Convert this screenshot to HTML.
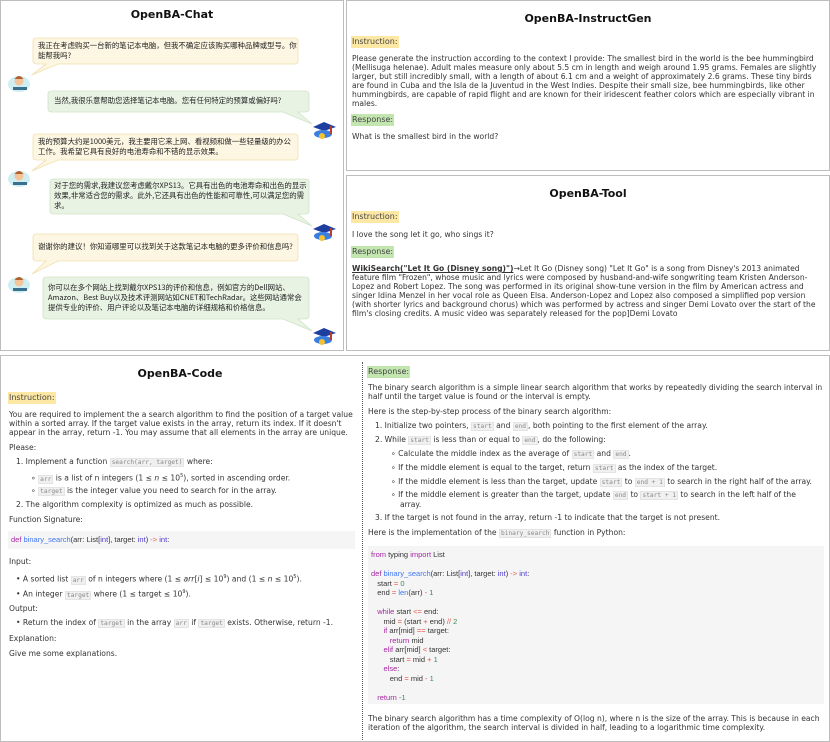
<!DOCTYPE html>
<html><head><meta charset="utf-8"><style>
*{margin:0;padding:0;box-sizing:border-box}
body{width:830px;height:742px;background:#fff;position:relative;overflow:hidden;font-family:"DejaVu Sans","Noto Sans CJK SC",sans-serif;font-size:7.6px;color:#333;line-height:9px}
.panel{position:absolute;border:1px solid #bdbdbd;background:#fff}
.title{position:absolute;font-weight:bold;font-size:11px;color:#111;text-align:center;font-family:"DejaVu Sans",sans-serif}
.abs{position:absolute}
.lab{position:absolute;padding:1px 1px;font-size:8px;line-height:10px;color:#444}
.ly{background:#fde7a4}.lg{background:#c3e6b0}
.cn{font-family:"Noto Sans CJK SC",sans-serif;font-size:7.4px;line-height:10px;color:#222}
code,.c{font-family:"DejaVu Sans Mono",monospace;font-size:6.2px;color:#888;background:#f0f0f0;border:1px solid #e4e4e4;padding:0 1px}
.kw{color:#a626a4}.fn{color:#4078f2}.op{color:#e45649}.nm{color:#3a8a5a}
</style></head><body>

<div class="panel" style="left:0;top:0;width:344px;height:351px"></div>
<div class="title" style="left:0;top:10px;width:344px">OpenBA-Chat</div>
<svg class="abs" style="left:0;top:0" width="344" height="351">
<g fill="#fdf6e2" stroke="#f1dfae" stroke-width="0.8">
<path d="M37 38 H295 Q298 38 298 41 V61 Q298 64 295 64 H58 L32 75 L46 64 H37 Q33 64 33 61 V41 Q33 38 37 38Z"/>
<path d="M37 134 H295 Q298 134 298 137 V157 Q298 160 295 160 H58 L32 171 L46 160 H37 Q33 160 33 157 V137 Q33 134 37 134Z"/>
<path d="M37 234 H295 Q298 234 298 237 V258 Q298 261 295 261 H58 L32 274 L46 261 H37 Q33 261 33 258 V237 Q33 234 37 234Z"/>
</g>
<g fill="#e9f3e4" stroke="#cfe3c4" stroke-width="0.8">
<path d="M52 91 H305 Q309 91 309 94 V109 Q309 112 305 112 H298 L312 124 L283 112 H52 Q48 112 48 109 V94 Q48 91 52 91Z"/>
<path d="M54 179 H305 Q309 179 309 182 V211 Q309 214 305 214 H298 L312 226 L283 214 H54 Q50 214 50 211 V182 Q50 179 54 179Z"/>
<path d="M47 277 H305 Q309 277 309 280 V316 Q309 319 305 319 H298 L312 331 L283 319 H47 Q43 319 43 316 V280 Q43 277 47 277Z"/>
</g>
<g>
<ellipse cx="19" cy="84" rx="11" ry="8" fill="#cfeef2"/><circle cx="19" cy="81" r="4.5" fill="#f3c39a"/><path d="M14.5 79 Q19 73 23.5 79Z" fill="#b5602a"/><rect x="13" y="87" width="14" height="3" fill="#3a6f8f"/>
<ellipse cx="19" cy="179" rx="11" ry="8" fill="#cfeef2"/><circle cx="19" cy="176" r="4.5" fill="#f3c39a"/><path d="M14.5 174 Q19 168 23.5 174Z" fill="#b5602a"/><rect x="13" y="182" width="14" height="3" fill="#3a6f8f"/>
<ellipse cx="19" cy="285" rx="11" ry="8" fill="#cfeef2"/><circle cx="19" cy="282" r="4.5" fill="#f3c39a"/><path d="M14.5 280 Q19 274 23.5 280Z" fill="#b5602a"/><rect x="13" y="288" width="14" height="3" fill="#3a6f8f"/>
</g>
<g>
<path d="M313 127 L324 122 L336 127 L324 131Z" fill="#1f3fa0"/><ellipse cx="323" cy="134" rx="9" ry="4" fill="#3a7ee0"/><circle cx="322" cy="136" r="3" fill="#f2c230"/><rect x="330" y="126" width="2" height="8" fill="#c0392b"/>
<path d="M313 229 L324 224 L336 229 L324 233Z" fill="#1f3fa0"/><ellipse cx="323" cy="236" rx="9" ry="4" fill="#3a7ee0"/><circle cx="322" cy="238" r="3" fill="#f2c230"/><rect x="330" y="228" width="2" height="8" fill="#c0392b"/>
<path d="M313 333 L324 328 L336 333 L324 337Z" fill="#1f3fa0"/><ellipse cx="323" cy="340" rx="9" ry="4" fill="#3a7ee0"/><circle cx="322" cy="342" r="3" fill="#f2c230"/><rect x="330" y="332" width="2" height="8" fill="#c0392b"/>
</g>
</svg>
<div class="abs cn" style="left:38px;top:41px;width:262px">我正在考虑购买一台新的笔记本电脑，但我不确定应该购买哪种品牌或型号。你能帮我吗?</div>
<div class="abs cn" style="left:54px;top:96px;width:254px">当然,我很乐意帮助您选择笔记本电脑。您有任何特定的预算或偏好吗?</div>
<div class="abs cn" style="left:38px;top:137px;width:258px">我的预算大约是1000美元，我主要用它来上网、看视频和做一些轻量级的办公工作。我希望它具有良好的电池寿命和不错的显示效果。</div>
<div class="abs cn" style="left:54px;top:181px;width:254px">对于您的需求,我建议您考虑戴尔XPS13。它具有出色的电池寿命和出色的显示效果,非常适合您的需求。此外,它还具有出色的性能和可靠性,可以满足您的需求。</div>
<div class="abs cn" style="left:38px;top:242px;width:262px">谢谢你的建议！你知道哪里可以找到关于这款笔记本电脑的更多评价和信息吗?</div>
<div class="abs cn" style="left:48px;top:283px;width:258px">你可以在多个网站上找到戴尔XPS13的评价和信息，例如官方的Dell网站、Amazon、Best Buy以及技术评测网站如CNET和TechRadar。这些网站通常会提供专业的评价、用户评论以及笔记本电脑的详细规格和价格信息。</div>

<div class="panel" style="left:346px;top:0;width:484px;height:171px"></div>
<div class="title" style="left:346px;top:14px;width:484px">OpenBA-InstructGen</div>
<div class="lab ly" style="left:351px;top:36px">Instruction:</div>
<div class="abs" style="left:352px;top:54px;width:472px">Please generate the instruction according to the context I provide: The smallest bird in the world is the bee hummingbird (Mellisuga helenae). Adult males measure only about 5.5 cm in length and weigh around 1.95 grams. Females are slightly larger, but still incredibly small, with a length of about 6.1 cm and a weight of approximately 2.6 grams. These tiny birds are found in Cuba and the Isla de la Juventud in the West Indies. Despite their small size, bee hummingbirds, like other hummingbirds, are capable of rapid flight and are known for their iridescent feather colors which are especially vibrant in males.</div>
<div class="lab lg" style="left:351px;top:114px">Response:</div>
<div class="abs" style="left:352px;top:132px">What is the smallest bird in the world?</div>

<div class="panel" style="left:346px;top:175px;width:484px;height:176px"></div>
<div class="title" style="left:346px;top:189px;width:484px">OpenBA-Tool</div>
<div class="lab ly" style="left:351px;top:211px">Instruction:</div>
<div class="abs" style="left:352px;top:230px">I love the song let it go, who sings it?</div>
<div class="lab lg" style="left:351px;top:246px">Response:</div>
<div class="abs" style="left:352px;top:264px;width:474px"><b style="text-decoration:underline">WikiSearch("Let It Go (Disney song)")</b>→Let It Go (Disney song) "Let It Go" is a song from Disney's 2013 animated feature film "Frozen", whose music and lyrics were composed by husband-and-wife songwriting team Kristen Anderson-Lopez and Robert Lopez. The song was performed in its original show-tune version in the film by American actress and singer Idina Menzel in her vocal role as Queen Elsa. Anderson-Lopez and Lopez also composed a simplified pop version (with shorter lyrics and background chorus) which was performed by actress and singer Demi Lovato over the start of the film's closing credits. A music video was separately released for the pop]Demi Lovato</div>

<div class="panel" style="left:0;top:355px;width:830px;height:387px"></div>
<div class="abs" style="left:362px;top:362px;height:378px;border-left:1.5px dotted #555"></div>
<div class="title" style="left:0;top:369px;width:360px">OpenBA-Code</div>
<div class="lab ly" style="left:8px;top:392px">Instruction:</div>
<div class="abs" style="left:9px;top:410px;width:350px">You are required to implement the a search algorithm to find the position of a target value within a sorted array. If the target value exists in the array, return its index. If it doesn't appear in the array, return -1. You may assume that all elements in the array are unique.</div>
<div class="abs" style="left:9px;top:443px">Please:</div>
<div class="abs" style="left:16px;top:457px">1. Implement a function <span class="c">search(arr, target)</span> where:</div>
<div class="abs" style="left:31px;top:472px">∘ <span class="c">arr</span> is a list of n integers (1 ≤ <i>n</i> ≤ 10<sup style="font-size:5px">5</sup>), sorted in ascending order.</div>
<div class="abs" style="left:31px;top:486px">∘ <span class="c">target</span> is the integer value you need to search for in the array.</div>
<div class="abs" style="left:16px;top:500px">2. The algorithm complexity is optimized as much as possible.</div>
<div class="abs" style="left:9px;top:515px">Function Signature:</div>
<div class="abs" style="left:8px;top:531px;width:347px;height:18px;background:#f5f5f5;padding:4px 3px;font-family:'Liberation Sans',sans-serif;font-size:7.5px"><span class="kw">def</span> <span class="fn">binary_search</span>(arr: List[<span style="color:#4b3ad0">int</span>], target: <span style="color:#4b3ad0">int</span>) <span class="op">-&gt;</span> <span style="color:#4b3ad0">int</span>:</div>
<div class="abs" style="left:9px;top:557px">Input:</div>
<div class="abs" style="left:16px;top:573px">• A sorted list <span class="c">arr</span> of n integers where (1 ≤ <i>arr</i>[<i>i</i>] ≤ 10<sup style="font-size:5px">9</sup>) and (1 ≤ <i>n</i> ≤ 10<sup style="font-size:5px">5</sup>).</div>
<div class="abs" style="left:16px;top:588px">• An integer <span class="c">target</span> where (1 ≤ target ≤ 10<sup style="font-size:5px">9</sup>).</div>
<div class="abs" style="left:9px;top:604px">Output:</div>
<div class="abs" style="left:16px;top:618px">• Return the index of <span class="c">target</span> in the array <span class="c">arr</span> if <span class="c">target</span> exists. Otherwise, return -1.</div>
<div class="abs" style="left:9px;top:634px">Explanation:</div>
<div class="abs" style="left:9px;top:649px">Give me some explanations.</div>

<div class="lab lg" style="left:367px;top:366px">Response:</div>
<div class="abs" style="left:368px;top:383px;width:458px">The binary search algorithm is a simple linear search algorithm that works by repeatedly dividing the search interval in half until the target value is found or the interval is empty.</div>
<div class="abs" style="left:368px;top:407px">Here is the step-by-step process of the binary search algorithm:</div>
<div class="abs" style="left:375px;top:421px">1. Initialize two pointers, <span class="c">start</span> and <span class="c">end</span>, both pointing to the first element of the array.</div>
<div class="abs" style="left:375px;top:435px">2. While <span class="c">start</span> is less than or equal to <span class="c">end</span>, do the following:</div>
<div class="abs" style="left:391px;top:449px">∘ Calculate the middle index as the average of <span class="c">start</span> and <span class="c">end</span>.</div>
<div class="abs" style="left:391px;top:463px">∘ If the middle element is equal to the target, return <span class="c">start</span> as the index of the target.</div>
<div class="abs" style="left:391px;top:477px;white-space:nowrap">∘ If the middle element is less than the target, update <span class="c">start</span> to <span class="c">end + 1</span> to search in the right half of the array.</div>
<div class="abs" style="left:391px;top:490px;width:420px;padding-left:9px;text-indent:-9px">∘ If the middle element is greater than the target, update <span class="c">end</span> to <span class="c">start + 1</span> to search in the left half of the array.</div>
<div class="abs" style="left:375px;top:513px">3. If the target is not found in the array, return -1 to indicate that the target is not present.</div>
<div class="abs" style="left:368px;top:528px">Here is the implementation of the <span class="c">binary_search</span> function in Python:</div>
<div class="abs" style="left:368px;top:546px;width:456px;height:158px;background:#f5f5f5;padding:4px 3px;font-family:'Liberation Sans',sans-serif;font-size:7.5px;line-height:9.5px;white-space:pre;color:#333"><span class="kw">from</span> typing <span class="kw">import</span> List

<span class="kw">def</span> <span class="fn">binary_search</span>(arr: List[<span style="color:#4b3ad0">int</span>], target: <span style="color:#4b3ad0">int</span>) <span class="op">-&gt;</span> <span style="color:#4b3ad0">int</span>:
   start <span class="op">=</span> <span class="nm">0</span>
   end <span class="op">=</span> <span class="fn">len</span>(arr) <span class="op">-</span> <span class="nm">1</span>

   <span class="kw">while</span> start <span class="op">&lt;=</span> end:
      mid <span class="op">=</span> (start <span class="op">+</span> end) <span class="op">//</span> <span class="nm">2</span>
      <span class="kw">if</span> arr[mid] <span class="op">==</span> target:
         <span class="kw">return</span> mid
      <span class="kw">elif</span> arr[mid] <span class="op">&lt;</span> target:
         start <span class="op">=</span> mid <span class="op">+</span> <span class="nm">1</span>
      <span class="kw">else</span>:
         end <span class="op">=</span> mid <span class="op">-</span> <span class="nm">1</span>

   <span class="kw">return</span> <span class="nm">-1</span></div>
<div class="abs" style="left:368px;top:714px;width:458px">The binary search algorithm has a time complexity of O(log n), where n is the size of the array. This is because in each iteration of the algorithm, the search interval is divided in half, leading to a logarithmic time complexity.</div>
</body></html>
